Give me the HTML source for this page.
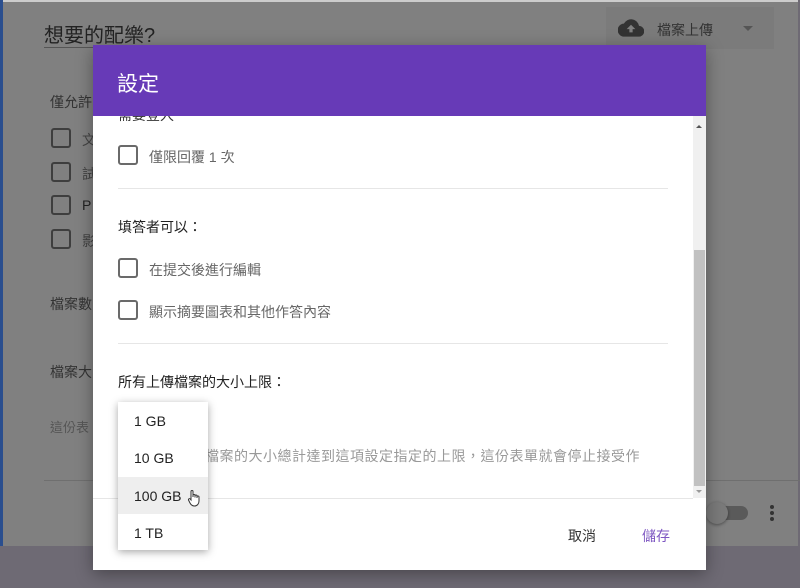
<!DOCTYPE html>
<html><head><meta charset="utf-8"><style>
*{margin:0;padding:0;box-sizing:border-box}
body{width:800px;height:588px;overflow:hidden;background:#6e6a74;font-family:"Liberation Sans","Noto Sans CJK TC",sans-serif;position:relative}
.a{position:absolute}
.card{left:0;top:0;width:798px;height:546px;background:#808080;border-top:2px solid #ccc}
.blue{left:0;top:0;width:3px;height:546px;background:#2a4e8e}
.cb{width:20px;height:20px;border:2px solid #3e3e3e;border-radius:3px}
.dcb{width:20px;height:20px;border:2px solid #6a6a6a;border-radius:3px}
.t{font-size:14px;color:#666;white-space:nowrap}
.dlg{left:93px;top:45px;width:613px;height:525px;background:#fff;box-shadow:0 4px 16px rgba(0,0,0,.35)}
.hd{left:0;top:0;width:613px;height:71px;background:#673ab7;color:#fff;font-size:21px;padding:23px 0 0 24px}
.hr{height:1px;background:#e6e6e6}
.menu{left:118px;top:402px;width:90px;height:148px;background:#fff;box-shadow:0 2px 8px rgba(0,0,0,.35)}
.mi{position:absolute;left:0;width:90px;height:37px;font-size:14px;color:#222;padding:11px 0 0 16px}
</style></head><body>
<div class="a card"></div><div class="a blue"></div>
<div class="a" style="left:44px;top:19px;font-size:20px;color:#222">想要的配樂?</div>
<div class="a" style="left:44px;top:47px;width:60px;height:1px;background:#555"></div>
<div class="a" style="left:606px;top:7px;width:168px;height:42px;background:#7b7b7b"></div>
<svg class="a" style="left:618px;top:18px" width="26" height="20" viewBox="0 0 24 18"><path d="M19.4 7A7.5 7.5 0 0 0 5.4 5 6 6 0 0 0 6 17h13a5 5 0 0 0 .4-10z" fill="#333"/><path d="M12 6l-4 4h2.5v3h3v-3H16z" fill="#808080"/></svg>
<div class="a" style="left:657px;top:20px;font-size:14px;color:#333">檔案上傳</div>
<div class="a" style="left:743px;top:26px;border:5px solid transparent;border-top:5px solid #555"></div>
<div class="a t" style="left:50px;top:92px;color:#333">僅允許</div>
<div class="a cb" style="left:51px;top:128px"></div><div class="a t" style="left:82px;top:130px;color:#444">文</div>
<div class="a cb" style="left:51px;top:162px"></div><div class="a t" style="left:82px;top:164px;color:#444">試</div>
<div class="a cb" style="left:51px;top:195px"></div><div class="a t" style="left:82px;top:197px;color:#222">P</div>
<div class="a cb" style="left:51px;top:229px"></div><div class="a t" style="left:82px;top:231px;color:#444">影</div>
<div class="a t" style="left:50px;top:294px;color:#333">檔案數</div>
<div class="a t" style="left:50px;top:362px;color:#333">檔案大</div>
<div class="a t" style="left:50px;top:417px;color:#555;font-size:13px">這份表</div>
<div class="a" style="left:44px;top:480px;width:760px;height:1px;background:#6f6f6f"></div>
<div class="a" style="left:708px;top:506px;width:40px;height:14px;border-radius:7px;background:#5a5a5a"></div>
<div class="a" style="left:706px;top:502px;width:22px;height:22px;border-radius:50%;background:#7a7a7a;box-shadow:0 1px 3px rgba(0,0,0,.4)"></div>
<div class="a" style="left:770px;top:505px;width:4px;height:4px;border-radius:2px;background:#333;box-shadow:0 6px 0 #333,0 12px 0 #333"></div>

<div class="a dlg">
<div class="a hd">設定</div>
<div class="a t" style="left:25px;top:60px;color:#333;clip-path:inset(11px 0 0 0)">需要登入</div>
<div class="a" style="left:600px;top:71px;width:13px;height:382px;background:#f0f0f0"></div>
<div class="a" style="left:601px;top:205px;width:11px;height:236px;background:#c1c1c1"></div>
<div class="a" style="left:603px;top:77px;border:3px solid transparent;border-bottom:3px solid #555"></div>
<div class="a" style="left:603px;top:445px;border:3px solid transparent;border-top:3px solid #999"></div>
<div class="a dcb" style="left:25px;top:100px"></div><div class="a t" style="left:56px;top:102px">僅限回覆 1 次</div>
<div class="a hr" style="left:25px;top:143px;width:550px"></div>
<div class="a t" style="left:25px;top:172px;color:#222">填答者可以：</div>
<div class="a dcb" style="left:25px;top:213px"></div><div class="a t" style="left:56px;top:215px">在提交後進行編輯</div>
<div class="a dcb" style="left:25px;top:255px"></div><div class="a t" style="left:56px;top:257px">顯示摘要圖表和其他作答內容</div>
<div class="a hr" style="left:25px;top:298px;width:550px"></div>
<div class="a t" style="left:25px;top:327px;color:#222">所有上傳檔案的大小上限：</div>
<div class="a t" style="left:25px;top:401px;color:#999;font-size:14px;letter-spacing:0.5px">如果所有上傳檔案的大小總計達到這項設定指定的上限，這份表單就會停止接受作</div>
<div class="a hr" style="left:0;top:453px;width:600px"></div>
<div class="a" style="left:475px;top:481px;font-size:14px;color:#333">取消</div>
<div class="a" style="left:549px;top:481px;font-size:14px;color:#7e57c2">儲存</div>
</div>

<div class="a menu">
<div class="mi" style="top:0">1 GB</div>
<div class="mi" style="top:37px">10 GB</div>
<div class="mi" style="top:75px;background:#eee">100 GB</div>
<div class="mi" style="top:112px">1 TB</div>
</div>
<svg class="a" style="left:187px;top:489px" width="14" height="18" viewBox="0 0 14 18"><path d="M4 9V2.5a1 1 0 0 1 2 0V8h0V6.5a1 1 0 0 1 2 0V8.5 7a1 1 0 0 1 2 0v2 -1a1 1 0 0 1 2 0v4c0 3-2 5-4.5 5S4 16 3 14L1.5 11a1 1 0 0 1 1.7-1L4 11z" fill="#fff" stroke="#333" stroke-width="1"/></svg>
</body></html>
